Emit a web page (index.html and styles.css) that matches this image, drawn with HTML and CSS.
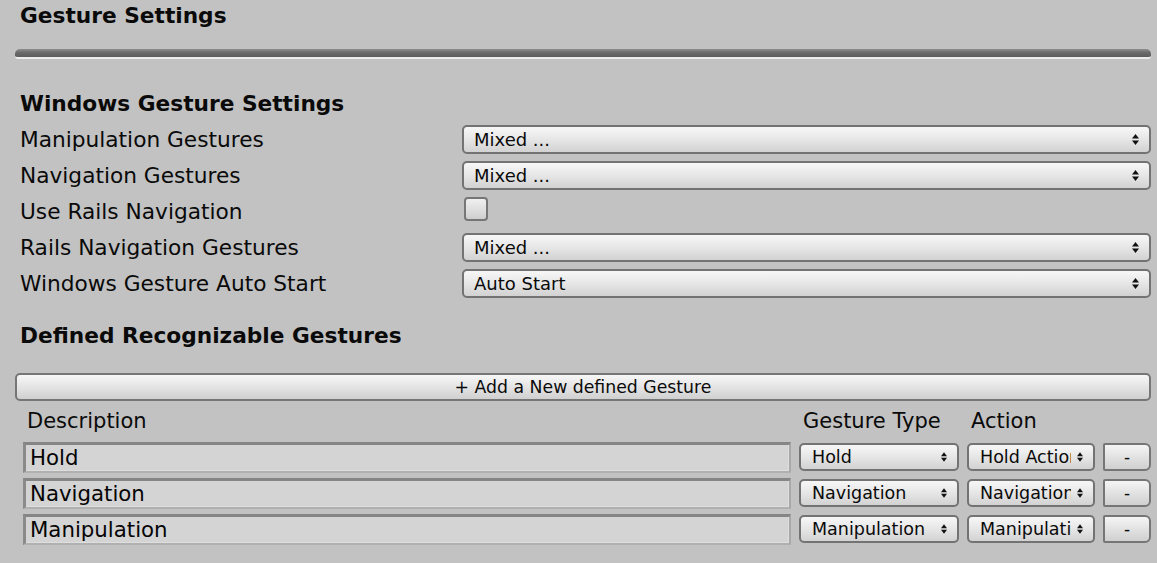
FILE: index.html
```html
<!DOCTYPE html>
<html>
<head>
<meta charset="utf-8">
<link rel="stylesheet" href="styles.css">
</head>
<body>
<div class="panel">
  <div class="title">Gesture Settings</div>
  <div class="separator"></div>

  <div class="section-head">Windows Gesture Settings</div>
  <div class="prop-grid">
    <div class="label">Manipulation Gestures</div>
    <div class="field"><div class="popup"><span class="popup-text">Mixed ...</span><svg class="arrows" viewBox="0 0 7 11"><polygon points="3.5,0 7,4.5 0,4.5"/><polygon points="0,6.5 7,6.5 3.5,11"/></svg></div></div>

    <div class="label">Navigation Gestures</div>
    <div class="field"><div class="popup"><span class="popup-text">Mixed ...</span><svg class="arrows" viewBox="0 0 7 11"><polygon points="3.5,0 7,4.5 0,4.5"/><polygon points="0,6.5 7,6.5 3.5,11"/></svg></div></div>

    <div class="label">Use Rails Navigation</div>
    <div class="field"><div class="checkbox"></div></div>

    <div class="label">Rails Navigation Gestures</div>
    <div class="field"><div class="popup"><span class="popup-text">Mixed ...</span><svg class="arrows" viewBox="0 0 7 11"><polygon points="3.5,0 7,4.5 0,4.5"/><polygon points="0,6.5 7,6.5 3.5,11"/></svg></div></div>

    <div class="label">Windows Gesture Auto Start</div>
    <div class="field"><div class="popup"><span class="popup-text">Auto Start</span><svg class="arrows" viewBox="0 0 7 11"><polygon points="3.5,0 7,4.5 0,4.5"/><polygon points="0,6.5 7,6.5 3.5,11"/></svg></div></div>
  </div>

  <div class="section-head defined">Defined Recognizable Gestures</div>
  <div class="add-button">+ Add a New defined Gesture</div>

  <div class="gesture-table">
    <div class="col-head">Description</div>
    <div class="col-head">Gesture Type</div>
    <div class="col-head">Action</div>
    <div></div>

    <div class="cell"><div class="textfield">Hold</div></div>
    <div class="cell"><div class="popup small"><span class="popup-text">Hold</span><svg class="arrows" viewBox="0 0 7 11"><polygon points="3.5,0 7,4.5 0,4.5"/><polygon points="0,6.5 7,6.5 3.5,11"/></svg></div></div>
    <div class="cell"><div class="popup small action"><span class="popup-text">Hold Action</span><svg class="arrows" viewBox="0 0 7 11"><polygon points="3.5,0 7,4.5 0,4.5"/><polygon points="0,6.5 7,6.5 3.5,11"/></svg></div></div>
    <div class="cell"><div class="minus">-</div></div>

    <div class="cell"><div class="textfield">Navigation</div></div>
    <div class="cell"><div class="popup small"><span class="popup-text">Navigation</span><svg class="arrows" viewBox="0 0 7 11"><polygon points="3.5,0 7,4.5 0,4.5"/><polygon points="0,6.5 7,6.5 3.5,11"/></svg></div></div>
    <div class="cell"><div class="popup small action"><span class="popup-text">Navigation Action</span><svg class="arrows" viewBox="0 0 7 11"><polygon points="3.5,0 7,4.5 0,4.5"/><polygon points="0,6.5 7,6.5 3.5,11"/></svg></div></div>
    <div class="cell"><div class="minus">-</div></div>

    <div class="cell"><div class="textfield">Manipulation</div></div>
    <div class="cell"><div class="popup small"><span class="popup-text">Manipulation</span><svg class="arrows" viewBox="0 0 7 11"><polygon points="3.5,0 7,4.5 0,4.5"/><polygon points="0,6.5 7,6.5 3.5,11"/></svg></div></div>
    <div class="cell"><div class="popup small action"><span class="popup-text">Manipulation Action</span><svg class="arrows" viewBox="0 0 7 11"><polygon points="3.5,0 7,4.5 0,4.5"/><polygon points="0,6.5 7,6.5 3.5,11"/></svg></div></div>
    <div class="cell"><div class="minus">-</div></div>
  </div>
</div>
</body>
</html>
```

FILE: styles.css
```css
html, body {
  margin: 0;
  padding: 0;
  background: #c2c2c2;
  width: 1157px;
  height: 563px;
  overflow: hidden;
}

body {
  font-family: "DejaVu Sans", Verdana, sans-serif;
  color: #0a0a0a;
}

.panel {
  padding: 0 6px 0 15px;
}

.title {
  font-weight: bold;
  font-size: 21.7px;
  line-height: 31px;
  padding-left: 5px;
}

.separator {
  margin-top: 18px;
  height: 8px;
  border-radius: 5px 5px 3px 3px;
  background: linear-gradient(#8e8e8e, #6a6a6a 45%, #5c5c5c);
  border-bottom: 2px solid #ececec;
}

.section-head {
  margin-top: 27px;
  font-weight: bold;
  font-size: 21.7px;
  line-height: 36px;
  padding-left: 5px;
}

.section-head.defined {
  margin-top: 16px;
}

.prop-grid {
  display: grid;
  grid-template-columns: 447px 689px;
  grid-auto-rows: 36px;
}

.label {
  font-size: 21.7px;
  line-height: 36px;
  padding-left: 5px;
  white-space: nowrap;
}

.field {
  padding-top: 3px;
}

.popup {
  box-sizing: border-box;
  height: 29px;
  border: 2px solid #737373;
  border-radius: 5px;
  background: linear-gradient(#f7f7f7, #e6e6e6 50%, #d2d2d2);
  display: flex;
  align-items: center;
  padding: 0 10px 0 10px;
  font-size: 18px;
  color: #0a0a0a;
}

.popup-text {
  flex: 1;
  overflow: hidden;
  white-space: nowrap;
}

.arrows {
  width: 7px;
  height: 11px;
  margin-left: 3px;
  fill: #111;
  flex: none;
}

.popup.small {
  height: 28px;
  font-size: 17.5px;
  padding: 0 10px 0 11px;
}

.popup.small .arrows {
  width: 6px;
  height: 10px;
}

.popup.action .arrows {
  margin-left: 6px;
}

.checkbox {
  box-sizing: border-box;
  width: 24px;
  height: 24px;
  margin-left: 2px;
  border: 2px solid #767676;
  border-radius: 4px;
  background: linear-gradient(#f0f0f0, #cfcfcf);
}

.add-button {
  box-sizing: border-box;
  margin-top: 19px;
  height: 28px;
  border: 2px solid #767676;
  border-radius: 5px;
  background: linear-gradient(#f7f7f7, #e4e4e4 50%, #d0d0d0);
  text-align: center;
  font-size: 17.3px;
  line-height: 24px;
}

.gesture-table {
  margin-top: 2px;
  margin-left: 8px;
  display: grid;
  grid-template-columns: 768px 160px 128px 48px;
  column-gap: 8px;
  grid-auto-rows: 36px;
}

.col-head {
  font-size: 21px;
  line-height: 36px;
  padding-left: 4px;
  white-space: nowrap;
}

.cell {
  padding-top: 3px;
}

.textfield {
  box-sizing: border-box;
  height: 31px;
  border-top: 3px solid #858585;
  border-left: 3px solid #8a8a8a;
  border-right: 2px solid #a8a8a8;
  border-bottom: 2px solid #b0b0b0;
  background: #d4d4d4;
  box-shadow: inset -1px -1px 0 #dedede;
  font-size: 21.3px;
  line-height: 25px;
  padding-left: 4px;
  color: #050505;
}

.cell .popup.small {
  margin-top: 1px;
}

.minus {
  box-sizing: border-box;
  height: 28px;
  margin-top: 1px;
  border: 2px solid #767676;
  border-radius: 2px 6px 6px 2px;
  background: linear-gradient(#f5f5f5, #e2e2e2 50%, #d0d0d0);
  text-align: center;
  font-size: 17px;
  line-height: 24px;
}
```
